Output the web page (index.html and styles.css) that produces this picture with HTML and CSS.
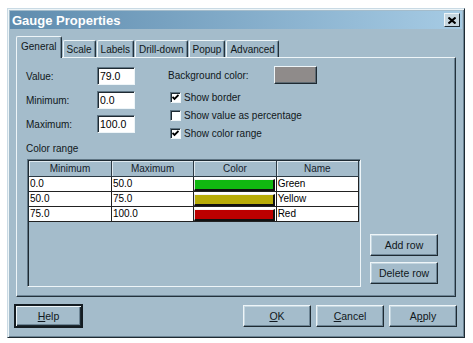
FILE: index.html
```html
<!DOCTYPE html>
<html lang="en">
<head>
    <meta charset="UTF-8">
    <title>Gauge Properties</title>
    <link rel="stylesheet" href="styles.css">
</head>
<body>

<div class="window">
    <!-- Title bar -->
    <div class="titlebar">
        <span class="title">Gauge Properties</span>
        <span class="close">
            <svg width="8" height="7" viewBox="0 0 8 7"><path d="M0.5 0.5 L7.5 6.5 M7.5 0.5 L0.5 6.5" stroke="#000" stroke-width="2"/></svg>
        </span>
    </div>

    <!-- Tabs -->
    <div class="tabs">
        <div class="tab active">General</div>
        <div class="tab">Scale</div>
        <div class="tab">Labels</div>
        <div class="tab">Drill-down</div>
        <div class="tab">Popup</div>
        <div class="tab">Advanced</div>
    </div>

    <div class="panel">
        <div class="top">
            <!-- Value fields -->
            <div class="fields">
                <div class="field"><label for="value">Value:</label><input type="text" id="value" value="79.0"></div>
                <div class="field"><label for="minimum">Minimum:</label><input type="text" id="minimum" value="0.0"></div>
                <div class="field"><label for="maximum">Maximum:</label><input type="text" id="maximum" value="100.0"></div>
            </div>

            <!-- Options -->
            <div class="options">
                <div class="bg-row"><span class="bg-label">Background color:</span><span class="swatch"></span></div>
                <div class="check"><span class="box"><svg width="7" height="7" viewBox="0 0 7 7"><path d="M0.5 3 L2.5 5 L6.5 1" stroke="#000" stroke-width="1.8" fill="none"/></svg></span>Show border</div>
                <div class="check"><span class="box"></span>Show value as percentage</div>
                <div class="check"><span class="box"><svg width="7" height="7" viewBox="0 0 7 7"><path d="M0.5 3 L2.5 5 L6.5 1" stroke="#000" stroke-width="1.8" fill="none"/></svg></span>Show color range</div>
            </div>
        </div>

        <div class="range-label">Color range</div>

        <div class="range">
            <div class="grid">
                <table>
                    <tr><th>Minimum</th><th>Maximum</th><th>Color</th><th>Name</th></tr>
                    <tr><td>0.0</td><td>50.0</td><td class="color-cell"><div class="chip green"></div></td><td>Green</td></tr>
                    <tr><td>50.0</td><td>75.0</td><td class="color-cell"><div class="chip yellow"></div></td><td>Yellow</td></tr>
                    <tr><td>75.0</td><td>100.0</td><td class="color-cell"><div class="chip red"></div></td><td>Red</td></tr>
                </table>
            </div>
            <div class="side-buttons">
                <button type="button">Add row</button>
                <button type="button">Delete row</button>
            </div>
        </div>
    </div>

    <!-- Dialog buttons -->
    <div class="footer">
        <button type="button" class="default"><u>H</u>elp</button>
        <div class="right-buttons">
            <button type="button"><u>O</u>K</button>
            <button type="button"><u>C</u>ancel</button>
            <button type="button">A<u>p</u>ply</button>
        </div>
    </div>
</div>

</body>
</html>
```

FILE: styles.css
```css
body {
    margin: 0;
    background: #fff;
    font-family: "Liberation Sans", Arial, sans-serif;
    font-size: 10px;
    color: #101820;
}
.window {
    margin: 8px 0 0 7px;
    width: 458px;
    height: 330px;
    box-sizing: border-box;
    background-color: #a4bccb;
    border: 1px solid;
    border-color: #c9dae4 #1e2a32 #1e2a32 #c9dae4;
    box-shadow: inset 1px 1px #eef5f8, inset -1px -1px #6d8595;
    padding: 2px;
}
.titlebar {
    height: 18px;
    display: flex;
    align-items: center;
    justify-content: space-between;
    padding: 0 2px 0 2px;
    background: linear-gradient(to right, #5f8cae, #a6cbe4);
}
.title {
    color: #fff;
    font-weight: bold;
    font-size: 13px;
}
.close {
    width: 16px;
    height: 14px;
    box-sizing: border-box;
    display: flex;
    align-items: center;
    justify-content: center;
    background: #c6d6df;
    border: 1px solid;
    border-color: #eef5f8 #1e2a32 #1e2a32 #eef5f8;
}

/* Tabs */
.tabs {
    display: flex;
    align-items: flex-end;
    height: 21px;
    margin: 7px 6px 0 6px;
    position: relative;
    z-index: 1;
}
.tab {
    height: 17px;
    line-height: 17px;
    box-sizing: border-box;
    padding: 0 3px;
    margin-left: 1px;
    border: 1px solid;
    border-color: #eef5f8 #24323c transparent #eef5f8;
    border-bottom: none;
    border-radius: 2px 2px 0 0;
    box-shadow: inset -1px 0 #6d8595;
}
.tab.active {
    height: 22px;
    margin-left: 0;
    margin-bottom: -1px;
    padding: 0 4px;
    line-height: 19px;
    background-color: #a4bccb;
}

/* Panel */
.panel {
    height: 240px;
    box-sizing: border-box;
    margin: 0 6px;
    border: 1px solid;
    border-color: #eef5f8 #24323c #24323c #eef5f8;
    box-shadow: inset -1px -1px #6d8595;
    padding: 9px 9px 9px 9px;
}
.top {
    display: flex;
    height: 76px;
}
.field {
    display: flex;
    align-items: center;
    height: 18px;
    margin-bottom: 6px;
}
.field label {
    width: 71px;
}
input {
    width: 38px;
    height: 18px;
    box-sizing: border-box;
    margin: 0;
    padding: 0 2px;
    font: inherit;
    font-size: 10.5px;
    color: #000;
    background: #fff;
    border: 1px solid;
    border-color: #5f7584 #eef5f8 #eef5f8 #5f7584;
    box-shadow: inset 1px 1px #1e2a32;
    outline: none;
}
.options {
    margin-left: 33px;
    margin-top: -1px;
}
.bg-row {
    display: flex;
    align-items: center;
    height: 18px;
    margin-bottom: 4px;
}
.bg-label {
    width: 106px;
}
.swatch {
    width: 43px;
    height: 18px;
    box-sizing: border-box;
    background-color: #8f8b8a;
    border: 1px solid;
    border-color: #eef5f8 #1e2a32 #1e2a32 #eef5f8;
    box-shadow: inset -1px -1px #5e6a72;
}
.check {
    display: flex;
    align-items: center;
    height: 18px;
    padding-left: 2px;
}
.box {
    width: 11px;
    height: 11px;
    box-sizing: border-box;
    margin-right: 3px;
    display: flex;
    align-items: center;
    justify-content: center;
    background: #fff;
    border: 1px solid;
    border-color: #5f7584 #eef5f8 #eef5f8 #5f7584;
    box-shadow: inset 1px 1px #1e2a32;
}
.range-label {
    height: 12px;
    line-height: 12px;
    margin-bottom: 4px;
}

/* Color range grid */
.range {
    display: flex;
}
.grid {
    width: 334px;
    height: 128px;
    box-sizing: border-box;
    margin-left: 1px;
    border: 1px solid;
    border-color: #5f7584 #eef5f8 #eef5f8 #5f7584;
    box-shadow: inset 1px 1px #1e2a32;
    padding: 1px 1px 0 1px;
}
table {
    width: 100%;
    border-collapse: collapse;
    table-layout: fixed;
}
th {
    height: 15px;
    padding: 0;
    font-weight: normal;
    color: #16222c;
    background-color: #a4bccb;
    border-right: 1px solid #2c3a44;
    border-bottom: 1px solid #2c3a44;
    box-shadow: inset 1px 1px #dfeaf0;
}
td {
    height: 13px;
    padding: 0 1px;
    line-height: 12px;
    background: #fff;
    color: #000;
    border-right: 1px solid #222;
    border-bottom: 1px solid #222;
    white-space: nowrap;
}
td.color-cell {
    padding: 1px 1px 0 0;
}
.chip {
    height: 12px;
    box-sizing: border-box;
    border-top: 1px solid #f4f4f4;
    border-left: 1px solid #e0e0e0;
    border-right: 2px solid #111;
    border-bottom: 2px solid #111;
}
.chip.green { background-color: #10b810; }
.chip.yellow { background-color: #b8ac08; }
.chip.red { background-color: #bc0000; }

/* Buttons */
button {
    height: 22px;
    width: 68px;
    box-sizing: border-box;
    padding: 0;
    font: inherit;
    font-size: 10.5px;
    color: #101820;
    background-color: #a4bccb;
    border: 1px solid;
    border-color: #eef5f8 #1e2a32 #1e2a32 #eef5f8;
    box-shadow: inset -1px -1px #6d8595, inset 1px 1px #c4d6e0;
}
.side-buttons {
    display: flex;
    flex-direction: column;
    justify-content: flex-end;
    gap: 6px;
    margin-left: 9px;
    padding-bottom: 3px;
}
.footer {
    display: flex;
    align-items: center;
    height: 24px;
    margin: 7px 4px 0 4px;
}
.footer button.default {
    width: 69px;
    height: 24px;
    outline: 1px solid #141c22;
    outline-offset: -1px;
    border-width: 2px;
    border-color: #141c22;
    box-shadow: inset 1px 1px #eef5f8, inset -1px -1px #1e2a32, inset -2px -2px #6d8595;
}
.right-buttons {
    display: flex;
    gap: 5px;
    margin-left: auto;
    margin-right: 1px;
}
```
